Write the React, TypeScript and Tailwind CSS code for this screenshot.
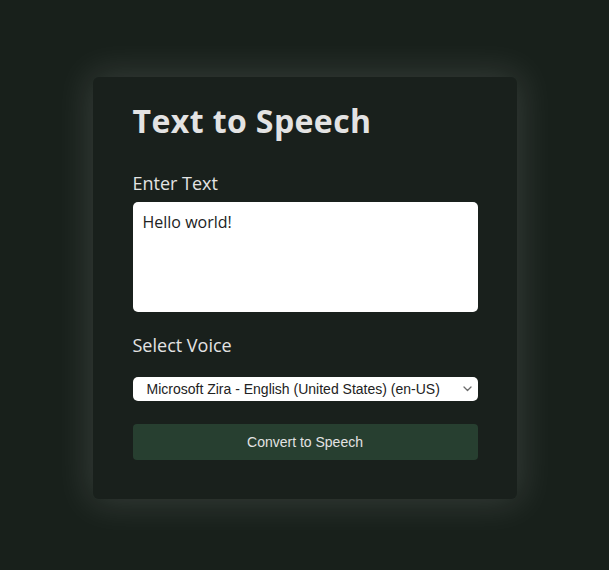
import React from "react";

export default function App() {
  return (
    <div className="min-h-[570px] w-full bg-[#18201b] flex justify-center pt-[77px]" style={{ fontFamily: '"Open Sans", "Noto Sans", sans-serif' }}>
      <div className="w-[424px] h-[422px] bg-[#19201c] rounded-[6px] shadow-[0_0_36px_4px_rgba(255,255,255,0.13)] px-[40px] pt-[20px] box-border">
        <h1 className="text-[32px] leading-[48px] font-bold text-[#e3e3e3] tracking-[0.4px]">Text to Speech</h1>
        <label className="block mt-[25px] text-[18px] leading-[27px] text-[#e3e3e3]">Enter Text</label>
        <textarea
          className="block mt-[5px] w-[345px] h-[110px] bg-white rounded-[5px] px-[10px] py-[8px] text-[16px] leading-[24px] text-[#222] resize-none outline-none"
          defaultValue="Hello world!"
        />
        <label className="block mt-[20px] text-[18px] leading-[27px] text-[#e3e3e3]">Select Voice</label>
        <div className="relative mt-[18px] w-[345px]">
          <select
            className="block w-[345px] h-[24px] bg-white rounded-[5px] pl-[14px] text-[14px] text-[#222] appearance-none outline-none"
            style={{ fontFamily: '"Liberation Sans", Arial, sans-serif' }}
          >
            <option>Microsoft Zira - English (United States) (en-US)</option>
          </select>
          <svg className="absolute right-[6px] top-[9px] pointer-events-none" width="9" height="6" viewBox="0 0 9 6" fill="none">
            <path d="M1 1 L4.5 4.5 L8 1" stroke="#6b6b6b" strokeWidth="1.3" strokeLinecap="round" strokeLinejoin="round" />
          </svg>
        </div>
        <button
          className="block mt-[23px] w-[345px] h-[36px] bg-[#273f30] rounded-[4px] text-[14px] text-[#e3e3e3]"
          style={{ fontFamily: '"Liberation Sans", Arial, sans-serif' }}
        >
          Convert to Speech
        </button>
      </div>
    </div>
  );
}
